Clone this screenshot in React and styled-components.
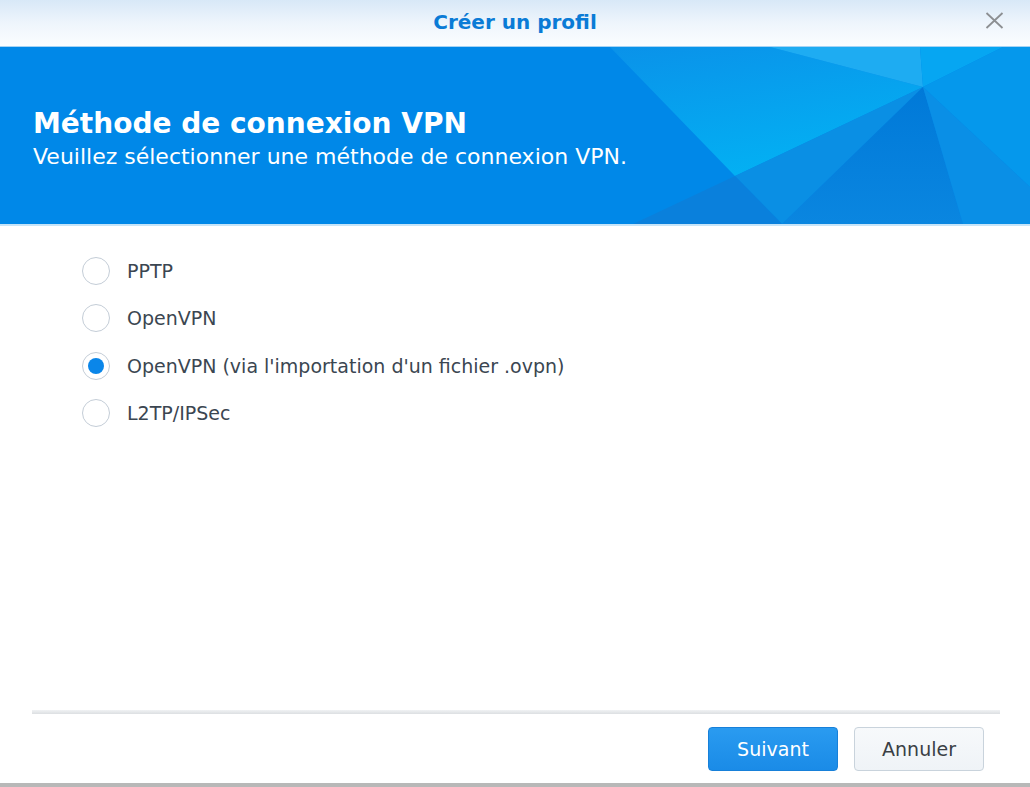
import React from 'react';
import styled, { createGlobalStyle } from 'styled-components';

const GlobalStyle = createGlobalStyle`
  html, body {
    margin: 0;
    padding: 0;
    background: #ffffff;
  }
  body {
    font-family: "DejaVu Sans", Verdana, sans-serif;
  }
  * {
    box-sizing: border-box;
  }
`;

const Dialog = styled.div`
  display: flex;
  flex-direction: column;
  width: 1030px;
  height: 787px;
  background: #ffffff;
  border-bottom: 4px solid #b8b8b8;
`;

const TitleBar = styled.div`
  display: grid;
  grid-template-columns: 1fr auto 1fr;
  align-items: center;
  height: 47px;
  background: linear-gradient(to bottom, #d8e8f7 0%, #eef5fc 50%, #fbfdff 100%);
  border-bottom: 1px solid #a6d3f4;
`;

const Title = styled.div`
  grid-column: 2;
  font-size: 20px;
  font-weight: bold;
  color: #0a7bd6;
  padding-bottom: 2px;
`;

const CloseButton = styled.div`
  grid-column: 3;
  justify-self: end;
  display: flex;
  align-items: center;
  justify-content: center;
  width: 24px;
  height: 24px;
  margin-right: 24px;
  margin-bottom: 6px;
  cursor: pointer;
`;

const Banner = styled.div`
  position: relative;
  display: flex;
  flex-direction: column;
  justify-content: center;
  height: 179px;
  padding: 8px 0 0 33px;
  background: #0088e8;
  border-bottom: 2px solid #c6e4f8;
  overflow: hidden;
`;

const BannerArt = styled.svg`
  position: absolute;
  top: 0;
  left: 0;
  width: 1030px;
  height: 177px;
`;

const BannerTitle = styled.h1`
  position: relative;
  margin: 0;
  font-size: 28px;
  font-weight: bold;
  color: #ffffff;
  line-height: 34px;
`;

const BannerText = styled.p`
  position: relative;
  margin: 1px 0 0;
  font-size: 22px;
  color: #ffffff;
  line-height: 30px;
`;

const Body = styled.div`
  flex: 1;
  display: flex;
  flex-direction: column;
  padding: 21px 0 0 82px;
`;

const Option = styled.label`
  display: flex;
  align-items: center;
  gap: 17px;
  height: 47.5px;
  font-size: 19px;
  color: #3b4651;
  cursor: pointer;
`;

const Radio = styled.span`
  display: flex;
  align-items: center;
  justify-content: center;
  width: 28px;
  height: 28px;
  border-radius: 50%;
  border: 1.5px solid #c4cdd7;
  background: #ffffff;

  &::after {
    content: '';
    width: 16px;
    height: 16px;
    border-radius: 50%;
    background: #0a86e9;
    display: ${(p) => (p.checked ? 'block' : 'none')};
  }
`;

const Divider = styled.div`
  height: 4px;
  margin: 0 30px 0 32px;
  background: linear-gradient(to bottom, #f0f2f4, #dcdfe2);
`;

const Footer = styled.div`
  display: flex;
  justify-content: flex-end;
  gap: 16px;
  padding: 13px 46px 12px 0;
`;

const Button = styled.button`
  width: 130px;
  height: 44px;
  border-radius: 4px;
  font-family: "DejaVu Sans", Verdana, sans-serif;
  font-size: 19px;
  cursor: pointer;
  border: 1px solid ${(p) => (p.primary ? '#1780d9' : '#c9d3dc')};
  background: ${(p) =>
    p.primary
      ? 'linear-gradient(to bottom, #2a9bf0, #1a8be7)'
      : 'linear-gradient(to bottom, #f7f9fb, #eff3f7)'};
  color: ${(p) => (p.primary ? '#ffffff' : '#3a3f45')};
`;

const options = [
  'PPTP',
  'OpenVPN',
  "OpenVPN (via l'importation d'un fichier .ovpn)",
  'L2TP/IPSec',
];

export default function App() {
  const selected = 2;

  return (
    <>
      <GlobalStyle />
      <Dialog>
        <TitleBar>
          <Title>Créer un profil</Title>
          <CloseButton>
            <svg width="19" height="17" viewBox="0 0 19 17">
              <path d="M1.5 1 L17.5 16 M17.5 1 L1.5 16" stroke="#8c8f92" strokeWidth="1.8" fill="none" />
            </svg>
          </CloseButton>
        </TitleBar>

        <Banner>
          <BannerArt viewBox="0 0 1030 177" preserveAspectRatio="none">
            <defs>
              <linearGradient id="cyan" x1="0" y1="0" x2="0.4" y2="1">
                <stop offset="0" stopColor="#0a92e9" />
                <stop offset="1" stopColor="#03b0f3" />
              </linearGradient>
              <linearGradient id="deep" x1="0" y1="0" x2="0" y2="1">
                <stop offset="0" stopColor="#0079d8" />
                <stop offset="1" stopColor="#0a86e0" />
              </linearGradient>
            </defs>
            <polygon points="610,0 770,0 923,40 735,129" fill="url(#cyan)" />
            <polygon points="770,0 920,0 923,40" fill="#1eacf2" />
            <polygon points="920,0 1003,0 923,40" fill="#06a6f2" />
            <polygon points="1003,0 1030,0 1030,140 923,40" fill="#0598ec" />
            <polygon points="735,129 923,40 782,177" fill="#0a8fe4" />
            <polygon points="923,40 782,177 963,177" fill="url(#deep)" />
            <polygon points="923,40 963,177 1030,177 1030,140" fill="#0a8fe6" />
            <polygon points="735,129 633,177 782,177" fill="#0a80dc" />
          </BannerArt>
          <BannerTitle>Méthode de connexion VPN</BannerTitle>
          <BannerText>Veuillez sélectionner une méthode de connexion VPN.</BannerText>
        </Banner>

        <Body>
          {options.map((label, i) => (
            <Option key={label}>
              <Radio checked={i === selected} />
              {label}
            </Option>
          ))}
        </Body>

        <Divider />
        <Footer>
          <Button primary>Suivant</Button>
          <Button>Annuler</Button>
        </Footer>
      </Dialog>
    </>
  );
}
